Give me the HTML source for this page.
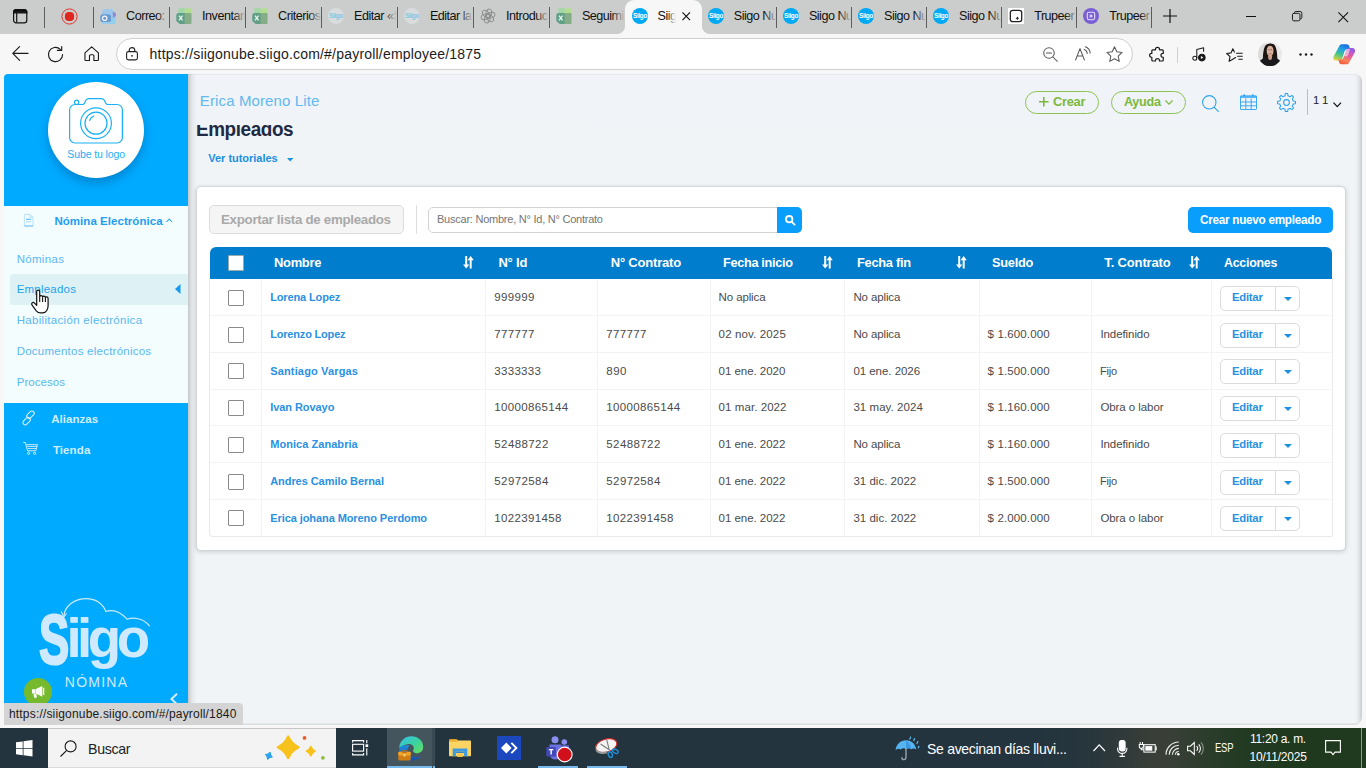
<!DOCTYPE html>
<html lang="es">
<head>
<meta charset="utf-8">
<title>Siigo Nube - Empleados</title>
<style>
*{box-sizing:border-box;margin:0;padding:0}
html,body{width:1366px;height:768px;overflow:hidden;background:#f7f7f7;font-family:"Liberation Sans",sans-serif;}
body{position:relative}
.a{position:absolute}
.t{position:absolute;white-space:pre;line-height:1}
svg{position:absolute;overflow:visible}
/* ---------- browser chrome ---------- */
#tabbar{position:absolute;left:0;top:0;width:1366px;height:34px;background:#cbcdcc}
#toolbar{position:absolute;left:0;top:34px;width:1366px;height:40px;background:#f7f7f7}
#acttab{position:absolute;left:625px;top:0;width:77px;height:34px;background:#f7f7f7;border-radius:9px 9px 0 0}
#acttab:before,#acttab:after{content:"";position:absolute;bottom:0;width:8px;height:8px}
#acttab:before{left:-8px;background:radial-gradient(circle at 0 0,rgba(247,247,247,0) 7.5px,#f7f7f7 8.5px)}
#acttab:after{right:-8px;background:radial-gradient(circle at 100% 0,rgba(247,247,247,0) 7.5px,#f7f7f7 8.5px)}
.tsep{position:absolute;top:7px;width:1px;height:21px;background:#5d5d5d}
.fade{position:absolute;top:6px;height:22px;width:22px;background:linear-gradient(90deg,rgba(203,205,204,0),#cbcdcc 85%)}
.fav{position:absolute;top:8px;width:16px;height:16px}
#addr{position:absolute;left:116px;top:38px;width:1017px;height:32px;border-radius:16px;background:#fff;border:1px solid #cfcfcf}
/* ---------- page ---------- */
#page{position:absolute;left:4px;top:74px;width:1358px;height:651px;background:#f0f4f7;border-radius:4px 7px 8px 0;overflow:hidden}
#page .t, #page .a, #page svg{ }
#side{position:absolute;left:0;top:0;width:184px;height:640px;background:#00aaff}
#sideshadow{z-index:3;position:absolute;left:184px;top:0;width:9px;height:651px;background:linear-gradient(90deg,rgba(0,0,0,.18),rgba(0,0,0,.05) 45%,rgba(0,0,0,0))}
#sub{position:absolute;left:0;top:132px;width:184px;height:197px;background:#f3fdfe}
#hl{position:absolute;left:6px;top:200px;width:178px;height:30.500px;background:#def2f5;border-radius:3px 0 0 3px}
#logoc{position:absolute;left:44px;top:8px;width:96px;height:96px;border-radius:50%;background:#fff;box-shadow:0 5px 10px rgba(0,40,90,.28)}
#status{position:absolute;left:0;top:629px;width:239px;height:22px;background:#d4d4d4;border-radius:0 4px 0 0}
#rshadow{position:absolute;right:0;top:0;width:7px;height:651px;background:linear-gradient(90deg,rgba(0,0,0,0),rgba(0,0,0,.05) 50%,rgba(0,0,0,.16))}
#tedge{position:absolute;left:184px;top:0;width:1174px;height:1px;background:rgba(0,0,20,.04)}
#bshadow{position:absolute;left:0;bottom:0;width:1358px;height:2px;background:linear-gradient(180deg,rgba(0,0,0,.02),rgba(0,0,0,.12))}
/* ---------- card / table ---------- */
#card{position:absolute;left:192px;top:112px;width:1150px;height:365px;background:#fff;border:1px solid #d2d5d9;border-radius:5px;box-shadow:0 1px 4px rgba(0,0,0,.16)}
#thead{position:absolute;left:206px;top:173px;width:1122px;height:31.600px;background:#007dcc;border-radius:6px 6px 0 0}
.cb{position:absolute;width:16px;height:16px;background:#fff;border:1px solid #8a8a8a;border-radius:1px}
.vl{position:absolute;width:1px;background:#f3f3f3}
.hl{position:absolute;height:1px;background:#f3f3f3}
.eb{position:absolute;width:80px;height:28px;border:1px solid #dcdcdc;border-radius:5px;background:#fff}
.eb i{position:absolute;left:53.500px;top:0;width:1px;height:26px;background:#dcdcdc}
.eb b{position:absolute;left:63px;top:12px;width:0;height:0;border-left:4px solid transparent;border-right:4px solid transparent;border-top:4.500px solid #1b8fe0}
/* ---------- taskbar ---------- */
#task{position:absolute;left:0;top:728px;width:1366px;height:40px;background:linear-gradient(90deg,#24343e 0%,#24343e 76%,#27363d 79.5%,#30393a 82%,#393f38 84.5%,#383f36 86%,#2b3c2b 88.5%,#223a22 91%,#1f391f 94%,#1f3a1f 100%)}
</style>
</head>
<body>
<!-- ================= BROWSER CHROME ================= -->
<div id="tabbar"></div>
<div id="toolbar"></div>
<div id="acttab"></div>
<svg style="left:12.8px;top:8.6px" width="14.4" height="14.4" viewBox="0 0 14.4 14.4" fill="none" stroke="#111" stroke-width="1.2"><rect x=".6" y=".6" width="13.2" height="13.2" rx="2.6"/><path d="M3.2.6h8a2.600 2.600 0 0 1 2.600 2.600v.6H.6v-.6A2.600 2.600 0 0 1 3.200.6z" fill="#111"/><path d="M3.700 4v9.600"/></svg>
<div class="tsep" style="left:44px"></div>
<svg style="left:60.900px;top:7.800px" width="17" height="17" viewBox="0 0 17 17"><circle cx="8.500" cy="8.500" r="7.600" fill="none" stroke="#e2352c" stroke-width="1"/><rect x="3.900" y="3.900" width="9.200" height="9.200" rx="3.800" fill="#e0271d"/></svg>
<div class="tsep" style="left:93.0px"></div>
<svg class="fav" style="left:100.1px" viewBox="0 0 16 16"><defs><linearGradient id="ol1" x1="0" y1="0" x2="1" y2="1"><stop offset="0" stop-color="#a5c3ea"/><stop offset="1" stop-color="#8fd3ee"/></linearGradient></defs><path d="M5 .900h7a1 1 0 0 1 1 1V6l2.800 1.700V15a1 1 0 0 1-1 1H3a1 1 0 0 1-1-1V3.900a3 3 0 0 1 3-3z" fill="url(#ol1)"/><path d="M12.800 3.200l3.100 2.100v2.700l-3.100 1.900z" fill="#9188d6"/><path d="M2.500 6.200h6a2.600 2.600 0 0 1 2.600 2.600v2.700a2.600 2.600 0 0 1-2.600 2.600h-6A2.200 2.200 0 0 1 .3 11.900V8.400a2.200 2.200 0 0 1 2.200-2.200z" fill="#6c9bd0"/><circle cx="4.700" cy="10.200" r="2.200" fill="none" stroke="#eef4fc" stroke-width="1.250"/></svg>
<div class="a tt" style="left:125.5px;top:6px;width:43px;height:22px;overflow:hidden"><span class="t" style="left:0.6px;top:4px;font-size:12.6px;color:#111;letter-spacing:-.5px">Correo:     </span><div class="fade" style="left:31px;top:0;width:13px;background:linear-gradient(90deg,rgba(203,205,204,0),#cbcdcc)"></div></div>
<div class="tsep" style="left:169.0px"></div>
<svg class="fav" style="left:176.1px" viewBox="0 0 16 16"><rect x="2.400" y=".3" width="6.300" height="6" fill="#9fd8a4"/><rect x="8.700" y=".3" width="6.800" height="6" fill="#b3de92"/><rect x="4" y="5" width="11.500" height="11" rx="1.200" fill="#86ae86"/><path d="M2.600 5h6v11H3.800L.3 13V7.300A2.300 2.300 0 0 1 2.600 5z" fill="#5f9f88"/><path d="M3 7.600l3.600 4.800M6.600 7.600L3 12.400" stroke="#e6f5ea" stroke-width="1.350" fill="none"/></svg>
<div class="a tt" style="left:201.5px;top:6px;width:43px;height:22px;overflow:hidden"><span class="t" style="left:0.6px;top:4px;font-size:12.6px;color:#111;letter-spacing:-.5px">Inventario</span><div class="fade" style="left:31px;top:0;width:13px;background:linear-gradient(90deg,rgba(203,205,204,0),#cbcdcc)"></div></div>
<div class="tsep" style="left:245.0px"></div>
<svg class="fav" style="left:252.1px" viewBox="0 0 16 16"><rect x="2.400" y=".3" width="6.300" height="6" fill="#9fd8a4"/><rect x="8.700" y=".3" width="6.800" height="6" fill="#b3de92"/><rect x="4" y="5" width="11.500" height="11" rx="1.200" fill="#86ae86"/><path d="M2.600 5h6v11H3.800L.3 13V7.300A2.300 2.300 0 0 1 2.600 5z" fill="#5f9f88"/><path d="M3 7.600l3.600 4.800M6.600 7.600L3 12.400" stroke="#e6f5ea" stroke-width="1.350" fill="none"/></svg>
<div class="a tt" style="left:277.5px;top:6px;width:43px;height:22px;overflow:hidden"><span class="t" style="left:0.6px;top:4px;font-size:12.6px;color:#111;letter-spacing:-.5px">Criterios de</span><div class="fade" style="left:31px;top:0;width:13px;background:linear-gradient(90deg,rgba(203,205,204,0),#cbcdcc)"></div></div>
<div class="tsep" style="left:320.9px"></div>
<svg class="fav" style="left:328.0px" viewBox="0 0 16 16"><circle cx="8" cy="8" r="8" fill="#d8dcdd"/><text x="8" y="10.3" font-family="Liberation Sans,sans-serif" font-size="6.4" font-weight="700" fill="#86c4e0" text-anchor="middle" letter-spacing="-.3">Siigo</text></svg>
<div class="a tt" style="left:353.4px;top:6px;width:43px;height:22px;overflow:hidden"><span class="t" style="left:0.6px;top:4px;font-size:12.6px;color:#111;letter-spacing:-.5px">Editar «Siigo</span><div class="fade" style="left:31px;top:0;width:13px;background:linear-gradient(90deg,rgba(203,205,204,0),#cbcdcc)"></div></div>
<div class="tsep" style="left:396.8px"></div>
<svg class="fav" style="left:403.9px" viewBox="0 0 16 16"><circle cx="8" cy="8" r="8" fill="#d8dcdd"/><text x="8" y="10.3" font-family="Liberation Sans,sans-serif" font-size="6.4" font-weight="700" fill="#86c4e0" text-anchor="middle" letter-spacing="-.3">Siigo</text></svg>
<div class="a tt" style="left:429.3px;top:6px;width:43px;height:22px;overflow:hidden"><span class="t" style="left:0.6px;top:4px;font-size:12.6px;color:#111;letter-spacing:-.5px">Editar la</span><div class="fade" style="left:31px;top:0;width:13px;background:linear-gradient(90deg,rgba(203,205,204,0),#cbcdcc)"></div></div>
<div class="tsep" style="left:472.9px"></div>
<svg class="fav" style="left:480.0px" viewBox="0 0 16 16" fill="none" stroke="#8b8d8b" stroke-width=".950" opacity=".95"><ellipse cx="8" cy="5.300" rx="2.700" ry="4.400" transform="rotate(15 8 8)"/><ellipse cx="8" cy="5.300" rx="2.700" ry="4.400" transform="rotate(75 8 8)"/><ellipse cx="8" cy="5.300" rx="2.700" ry="4.400" transform="rotate(135 8 8)"/><ellipse cx="8" cy="5.300" rx="2.700" ry="4.400" transform="rotate(195 8 8)"/><ellipse cx="8" cy="5.300" rx="2.700" ry="4.400" transform="rotate(255 8 8)"/><ellipse cx="8" cy="5.300" rx="2.700" ry="4.400" transform="rotate(315 8 8)"/></svg>
<div class="a tt" style="left:505.4px;top:6px;width:43px;height:22px;overflow:hidden"><span class="t" style="left:0.6px;top:4px;font-size:12.6px;color:#111;letter-spacing:-.5px">Introducción</span><div class="fade" style="left:31px;top:0;width:13px;background:linear-gradient(90deg,rgba(203,205,204,0),#cbcdcc)"></div></div>
<div class="tsep" style="left:548.8px"></div>
<svg class="fav" style="left:555.9px" viewBox="0 0 16 16"><rect x="2.400" y=".3" width="6.300" height="6" fill="#9fd8a4"/><rect x="8.700" y=".3" width="6.800" height="6" fill="#b3de92"/><rect x="4" y="5" width="11.500" height="11" rx="1.200" fill="#86ae86"/><path d="M2.600 5h6v11H3.800L.3 13V7.300A2.300 2.300 0 0 1 2.600 5z" fill="#5f9f88"/><path d="M3 7.600l3.600 4.800M6.600 7.600L3 12.400" stroke="#e6f5ea" stroke-width="1.350" fill="none"/></svg>
<div class="a tt" style="left:581.3px;top:6px;width:43px;height:22px;overflow:hidden"><span class="t" style="left:0.6px;top:4px;font-size:12.6px;color:#111;letter-spacing:-.5px">Seguimiento</span><div class="fade" style="left:31px;top:0;width:13px;background:linear-gradient(90deg,rgba(203,205,204,0),#cbcdcc)"></div></div>
<svg class="fav" style="left:631.6px" viewBox="0 0 16 16"><circle cx="8" cy="8" r="8" fill="#00a9f4"/><text x="8" y="10.3" font-family="Liberation Sans,sans-serif" font-size="6.4" font-weight="700" fill="#fff" text-anchor="middle" letter-spacing="-.3">Siigo</text></svg>
<div class="a tt" style="left:657.0px;top:6px;width:20px;height:22px;overflow:hidden"><span class="t" style="left:0.6px;top:4px;font-size:12.6px;color:#111;letter-spacing:-.5px">Siigo Nube</span><div class="fade" style="left:10px;top:0;width:10px;background:linear-gradient(90deg,rgba(247,247,247,0),#f7f7f7 90%)"></div></div>
<svg class="fav" style="left:707.8px" viewBox="0 0 16 16"><circle cx="8" cy="8" r="8" fill="#00a9f4"/><text x="8" y="10.3" font-family="Liberation Sans,sans-serif" font-size="6.4" font-weight="700" fill="#fff" text-anchor="middle" letter-spacing="-.3">Siigo</text></svg>
<div class="a tt" style="left:733.2px;top:6px;width:43px;height:22px;overflow:hidden"><span class="t" style="left:0.6px;top:4px;font-size:12.6px;color:#111;letter-spacing:-.5px">Siigo Nube</span><div class="fade" style="left:31px;top:0;width:13px;background:linear-gradient(90deg,rgba(203,205,204,0),#cbcdcc)"></div></div>
<div class="tsep" style="left:775.8px"></div>
<svg class="fav" style="left:782.9px" viewBox="0 0 16 16"><circle cx="8" cy="8" r="8" fill="#00a9f4"/><text x="8" y="10.3" font-family="Liberation Sans,sans-serif" font-size="6.4" font-weight="700" fill="#fff" text-anchor="middle" letter-spacing="-.3">Siigo</text></svg>
<div class="a tt" style="left:808.3px;top:6px;width:43px;height:22px;overflow:hidden"><span class="t" style="left:0.6px;top:4px;font-size:12.6px;color:#111;letter-spacing:-.5px">Siigo Nube</span><div class="fade" style="left:31px;top:0;width:13px;background:linear-gradient(90deg,rgba(203,205,204,0),#cbcdcc)"></div></div>
<div class="tsep" style="left:850.9px"></div>
<svg class="fav" style="left:858.0px" viewBox="0 0 16 16"><circle cx="8" cy="8" r="8" fill="#00a9f4"/><text x="8" y="10.3" font-family="Liberation Sans,sans-serif" font-size="6.4" font-weight="700" fill="#fff" text-anchor="middle" letter-spacing="-.3">Siigo</text></svg>
<div class="a tt" style="left:883.4px;top:6px;width:43px;height:22px;overflow:hidden"><span class="t" style="left:0.6px;top:4px;font-size:12.6px;color:#111;letter-spacing:-.5px">Siigo Nube</span><div class="fade" style="left:31px;top:0;width:13px;background:linear-gradient(90deg,rgba(203,205,204,0),#cbcdcc)"></div></div>
<div class="tsep" style="left:926.0px"></div>
<svg class="fav" style="left:933.1px" viewBox="0 0 16 16"><circle cx="8" cy="8" r="8" fill="#00a9f4"/><text x="8" y="10.3" font-family="Liberation Sans,sans-serif" font-size="6.4" font-weight="700" fill="#fff" text-anchor="middle" letter-spacing="-.3">Siigo</text></svg>
<div class="a tt" style="left:958.5px;top:6px;width:43px;height:22px;overflow:hidden"><span class="t" style="left:0.6px;top:4px;font-size:12.6px;color:#111;letter-spacing:-.5px">Siigo Nube</span><div class="fade" style="left:31px;top:0;width:13px;background:linear-gradient(90deg,rgba(203,205,204,0),#cbcdcc)"></div></div>
<div class="tsep" style="left:1001.1px"></div>
<svg class="fav" style="left:1008.2px" viewBox="0 0 16 16"><rect width="16" height="16" fill="#fff"/><rect x="2.3" y="2.3" width="11.4" height="11.4" rx="2.4" fill="none" stroke="#202020" stroke-width="1.3"/><path d="M9.4 8.8v3M7.9 10.3h3" stroke="#202020" stroke-width="1"/></svg>
<div class="a tt" style="left:1033.6px;top:6px;width:43px;height:22px;overflow:hidden"><span class="t" style="left:0.6px;top:4px;font-size:12.6px;color:#111;letter-spacing:-.5px">Trupeer</span><div class="fade" style="left:31px;top:0;width:13px;background:linear-gradient(90deg,rgba(203,205,204,0),#cbcdcc)"></div></div>
<div class="tsep" style="left:1076.2px"></div>
<svg class="fav" style="left:1083.3px" viewBox="0 0 16 16"><circle cx="8" cy="8" r="8" fill="#7a5fd3"/><rect x="4.3" y="4.3" width="7.4" height="7.4" rx="1.6" fill="none" stroke="#e8e0ff" stroke-width="1.1"/><rect x="6.6" y="6.6" width="2.8" height="2.8" fill="#d8ccff"/></svg>
<div class="a tt" style="left:1108.7px;top:6px;width:43px;height:22px;overflow:hidden"><span class="t" style="left:0.6px;top:4px;font-size:12.6px;color:#111;letter-spacing:-.5px">Trupeer</span><div class="fade" style="left:31px;top:0;width:13px;background:linear-gradient(90deg,rgba(203,205,204,0),#cbcdcc)"></div></div>
<div class="tsep" style="left:1151.3px"></div>
<svg style="left:682.200px;top:12.400px" width="8.500" height="8.500" viewBox="0 0 9 9" stroke="#111" stroke-width="1.200" fill="none"><path d="M.5.5l8 8M8.5.5l-8 8"/></svg>
<svg style="left:1163px;top:9px" width="14" height="14" viewBox="0 0 14 14" stroke="#111" stroke-width="1.2" fill="none"><path d="M7 0v14M0 7h14"/></svg>
<svg style="left:1246px;top:11px" width="10" height="11" viewBox="0 0 10 11" stroke="#111" stroke-width="1" fill="none"><path d="M0 5.5h10"/></svg>
<svg style="left:1291.700px;top:11.300px" width="10.300" height="10.300" viewBox="0 0 11 11" stroke="#111" stroke-width="1" fill="none"><rect x=".5" y="2.5" width="8" height="8" rx="1.6"/><path d="M2.6 2.3V2A1.5 1.5 0 0 1 4.1.5H8.6a1.9 1.9 0 0 1 1.9 1.9V7A1.5 1.5 0 0 1 9 8.4h-.4"/></svg>
<svg style="left:1338px;top:11.5px" width="10.5" height="10.5" viewBox="0 0 10.5 10.5" stroke="#111" stroke-width="1.05" fill="none"><path d="M.4.4l9.7 9.7M10.1.4L.4 10.1"/></svg>
<!-- toolbar -->
<svg style="left:12px;top:46px" width="17" height="15" viewBox="0 0 17 15" stroke="#1a1a1a" stroke-width="1.15" fill="none" stroke-linecap="round" stroke-linejoin="round"><path d="M16 7.4H.8M7.6.6L.8 7.4l6.8 6.9"/></svg>
<svg style="left:47.300px;top:45.900px" width="17" height="17" viewBox="0 0 17 17" stroke="#1a1a1a" stroke-width="1.15" fill="none" stroke-linecap="round" stroke-linejoin="round"><path d="M15.6 8.5a7.1 7.1 0 1 1-2.3-5.2"/><path d="M10.4 3.4h4.3V-.4" transform="translate(0,1)"/></svg>
<svg style="left:84.300px;top:46.100px" width="15.400" height="15.400" viewBox="0 0 16 16" stroke="#1a1a1a" stroke-width="1.15" fill="none" stroke-linejoin="round"><path d="M1 7.2L8 .9l7 6.3V14.3a.8.8 0 0 1-.8.8H10.3V10.2a1.1 1.1 0 0 0-1.1-1.1H6.8a1.1 1.1 0 0 0-1.1 1.1v4.9H1.8a.8.8 0 0 1-.8-.8z"/></svg>
<div id="addr"></div>
<svg style="left:126px;top:46.5px" width="12" height="13.5" viewBox="0 0 12 13.5" stroke="#222" stroke-width="1.1" fill="none"><rect x=".6" y="4.6" width="10.8" height="8.3" rx="1.8"/><path d="M3.2 4.6V3.4a2.8 2.8 0 0 1 5.6 0v1.2"/><circle cx="6" cy="8.8" r=".9" fill="#222" stroke="none"/></svg>
<span class="t" style="left:149.6px;top:47px;font-size:14px;color:#1b1b1b;letter-spacing:0.202px;">https://siigonube.siigo.com/#/payroll/employee/1875</span>
<svg style="left:1042.5px;top:46.5px" width="15" height="15" viewBox="0 0 15 15" stroke="#5a5a5a" stroke-width="1.05" fill="none" stroke-linecap="round"><circle cx="6" cy="6" r="5.3"/><path d="M3.4 6h5.2M10 10l4.3 4.3"/></svg>
<svg style="left:1075px;top:46px" width="16" height="15" viewBox="0 0 16 15" stroke="#5a5a5a" stroke-width="1.05" fill="none" stroke-linecap="round" stroke-linejoin="round"><path d="M.6 14L5 2.6 9.4 14M2.2 10h5.6"/><path d="M9.2 3.6a4.6 4.6 0 0 1 3 3.9M10.3.8a7.3 7.3 0 0 1 4.9 6.3"/></svg>
<svg style="left:1105.5px;top:46px" width="17" height="16.5" viewBox="0 0 17 16.5" stroke="#5a5a5a" stroke-width="1.05" fill="none" stroke-linejoin="round"><path d="M8.5.8l2.3 4.9 5.3.7-3.9 3.7 1 5.3-4.7-2.6-4.7 2.6 1-5.3L.9 6.4l5.3-.7z"/></svg>
<svg style="left:1149.5px;top:45.5px" width="15" height="17" viewBox="0 0 15 17" stroke="#1a1a1a" stroke-width="1.25" fill="none" stroke-linejoin="round"><path d="M5.4 3.3a2.1 2.1 0 0 1 4.2 0v.5h2.9a1 1 0 0 1 1 1v2.7h-.4a2 2 0 0 0 0 4h.4v2.9a1 1 0 0 1-1 1H9.6v-.4a2.1 2.1 0 0 0-4.2 0v.4H2.6a1 1 0 0 1-1-1v-2.9h-.3a2 2 0 0 1 0-4h.3V4.8a1 1 0 0 1 1-1h2.8z" transform="translate(.3,.2) scale(.96)"/></svg>
<div class="a" style="left:1177px;top:46.5px;width:1px;height:16px;background:#d0d0d0"></div>
<svg style="left:1192px;top:47px" width="14" height="15" viewBox="0 0 14 15" stroke="#1a1a1a" stroke-width="1.05" fill="none" stroke-linejoin="round"><path d="M4.8 11V2.6L11.6.8v4"/><circle cx="2.8" cy="11.2" r="2" /><circle cx="9.8" cy="10.6" r="3.3" fill="#1a1a1a"/><path d="M8.9 9.1v3l2.4-1.5z" fill="#fff" stroke="none"/></svg>
<svg style="left:1225.5px;top:46px" width="17" height="16.5" viewBox="0 0 17 16.5" stroke="#1a1a1a" stroke-width="1.1" fill="none" stroke-linejoin="round" stroke-linecap="round"><path d="M9.6 11.6L6.8 13.2 3.1 15.3l.9-4.6L.7 7.5l4.4-.6L6.8 2.800l1.600 3.3"/><path d="M10.500 7.300h5.800M11.600 10.300h4.700M12.800 13.300h3.500" /></svg>
<svg style="left:1257.500px;top:41.500px" width="24" height="24" viewBox="0 0 24 24"><defs><clipPath id="avc"><circle cx="12" cy="12" r="12"/></clipPath></defs><g clip-path="url(#avc)"><rect width="24" height="24" fill="#ebe9e8"/><rect x="0" y="0" width="7" height="24" fill="#dedcda"/><path d="M5.200 24C4.600 17 4.800 8.500 7 4.200 8.600 1 15.200.6 17.200 4c2.300 4.300 2.400 13 1.700 20z" fill="#1b1512"/><path d="M8.700 8.800c0-3.200 1.500-5 3.400-5s3.400 1.800 3.400 5c0 3.300-1.500 5.600-3.400 5.600s-3.400-2.300-3.400-5.600z" fill="#d8b09a"/><path d="M10.300 10.900c1.100.8 2.500.8 3.600 0-.3 1.100-1 1.700-1.800 1.700s-1.500-.6-1.800-1.700z" fill="#b5736a"/><path d="M10.400 7.700h1.200M12.700 7.700h1.200" stroke="#4a342c" stroke-width=".7"/><path d="M0 24c.4-4.600 3.600-7.400 7.800-8.400l4.300 1.700 4.300-1.700c4.200 1 7.200 3.800 7.600 8.400z" fill="#1a1a1d"/><path d="M10 14h4.200l-.2 2.100a1.900 1.900 0 0 1-3.800 0z" fill="#c99f8a"/></g></svg>
<svg style="left:1299px;top:52.5px" width="14" height="3" viewBox="0 0 14 3" fill="#1a1a1a"><circle cx="1.500" cy="1.500" r="1.200"/><circle cx="7" cy="1.500" r="1.200"/><circle cx="12.500" cy="1.500" r="1.200"/></svg>
<svg style="left:1333px;top:43.800px" width="22.400" height="20.600" viewBox="0 0 22.400 20.600"><defs><linearGradient id="cp1" x1=".6" y1="0" x2=".2" y2="1"><stop offset="0" stop-color="#1b6fe0"/><stop offset=".3" stop-color="#20a4e4"/><stop offset=".62" stop-color="#45c78a"/><stop offset="1" stop-color="#e9d33c"/></linearGradient><linearGradient id="cp2" x1=".7" y1="0" x2=".3" y2="1"><stop offset="0" stop-color="#8f5ce6"/><stop offset=".4" stop-color="#e25aa8"/><stop offset=".75" stop-color="#f7855a"/><stop offset="1" stop-color="#f25c3c"/></linearGradient></defs><path d="M6.200 2.200C6.700.900 7.800.3 9.100.3h4.400c1.400 0 2.400.8 2.800 2.100l.8 2.600h-2.300c-1.500 0-2.600.9-3.100 2.300l-2.500 7.300c-.5 1.300-1.500 2-2.900 2H3.100C1 16.600-.3 14.700.4 12.700z" fill="url(#cp1)"/><path d="M16.200 18.400c-.5 1.300-1.600 1.900-2.900 1.900H8.900c-1.400 0-2.400-.8-2.800-2.100l-.8-2.600h2.300c1.500 0 2.600-.9 3.100-2.300l2.500-7.300c.5-1.300 1.500-2 2.900-2h3.200c2.100 0 3.400 1.900 2.700 3.900z" fill="url(#cp2)"/><path d="M11.700 7.300c.5-1.400 1.600-2.300 3.100-2.300h2.300l-1.700 5.400c-.4 1.200-1.300 1.900-2.500 1.900h-2.900z" fill="#fdf3f6" opacity=".55"/></svg>
<!-- ================= PAGE ================= -->
<div id="pagetop" class="a" style="left:10px;top:73px;width:1346px;height:1px;background:#f3f5f9"></div>
<div id="page">
<!-- coordinates inside #page are offset by (-4,-74) from the screen -->
<div id="side">
  <div id="logoc"></div>
  <!-- camera -->
  <svg style="left:65px;top:24px" width="54" height="46" viewBox="0 0 54 46" fill="none" stroke="#1bb0f6" stroke-width="1.200" stroke-linejoin="round">
    <path d="M6 6.500h7.300c1.200 0 1.800-.5 2.300-1.600l.9-2.100C17.100 1.400 18.200.6 19.700.6h12.800c1.500 0 2.600.8 3.200 2.200l.9 2.100c.5 1.100 1.100 1.600 2.300 1.600H48c3 0 5.400 2.400 5.400 5.400v27.700c0 3-2.400 5.400-5.400 5.400H6c-3 0-5.400-2.400-5.400-5.400V11.900C.6 8.900 3 6.500 6 6.500z"/>
    <circle cx="27" cy="25.200" r="15.400"/>
    <circle cx="27" cy="25.200" r="11"/>
    <path d="M20.600 22.500a7 7 0 0 1 4-4.400" stroke-linecap="round"/>
    <circle cx="7.600" cy="4.300" r="2.200"/>
  </svg>
  <span class="t" style="left:63.3px;top:75px;font-size:10.5px;color:#25aff5;letter-spacing:-0.106px;">Sube tu logo</span>
  <div id="sub"></div>
  <div id="hl"></div>
  <!-- doc icon -->
  <svg style="left:19.800px;top:139.600px" width="9.400" height="12.400" viewBox="0 0 9.400 12.400" fill="none" stroke="#a9dcfa" stroke-width=".8"><path d="M.400.400h5.600l3 3v8.600h-8.600z"/><path d="M6 .400v3h3"/><path d="M2 5.400h5.200" stroke="#74c3f3" stroke-width="1.300"/><path d="M2 7.800h5.200" stroke="#8fd0f6" stroke-width=".8"/><path d="M.400 12h8.600" stroke="#6bbcf0" stroke-width=".9"/></svg>
  <span class="t" style="left:50.4px;top:142px;font-size:11.5px;font-weight:700;color:#1f9df0;letter-spacing:0.049px;">Nómina Electrónica</span>
  <svg style="left:162.200px;top:143.800px" width="6.500" height="4.500" viewBox="0 0 6.500 4.500" fill="none" stroke="#29a1e8" stroke-width="1.100"><path d="M.500 4l2.750-3L6 4"/></svg>
  <span class="t" style="left:12.7px;top:180px;font-size:11.5px;color:#5ab8f1;letter-spacing:0.302px;">Nóminas</span>
  <span class="t" style="left:12.7px;top:210px;font-size:11.5px;color:#1fa2ee;letter-spacing:0.207px;">Empleados</span>
  <span class="t" style="left:12.7px;top:241px;font-size:11.5px;color:#5ab8f1;letter-spacing:0.310px;">Habilitación electrónica</span>
  <span class="t" style="left:12.7px;top:272px;font-size:11.5px;color:#5ab8f1;letter-spacing:0.240px;">Documentos electrónicos</span>
  <span class="t" style="left:12.7px;top:303px;font-size:11.5px;color:#5ab8f1;letter-spacing:0.066px;">Procesos</span>
  <svg style="left:171px;top:209.800px" width="5.500" height="10" viewBox="0 0 5.500 10"><path d="M5.500 0v10L0 5z" fill="#1599ee"/></svg>
  <!-- link icon -->
  <svg style="left:17.500px;top:337.500px" width="14" height="13" viewBox="0 0 14 13" fill="none" stroke="#d9f1ff" stroke-width="1.050"><rect x="6.200" y="-1.600" width="4.600" height="8.600" rx="2.300" transform="rotate(45 8.500 2.700)"/><rect x="2.300" y="4.900" width="4.600" height="8.600" rx="2.300" transform="rotate(45 4.600 9.200)"/></svg>
  <span class="t" style="left:47.3px;top:340px;font-size:11.5px;font-weight:700;color:#d0eeff;letter-spacing:0.018px;">Alianzas</span>
  <!-- cart icon -->
  <svg style="left:18.500px;top:368px" width="15" height="13" viewBox="0 0 15 13" fill="none" stroke="#d9f1ff" stroke-width=".950"><path d="M.3.500h2l2.300 8.300h8.200l1.600-6.100H3.300"/><path d="M4.300 4.500h9.500M4.900 6.500h8.500" stroke-width=".8"/><circle cx="5.600" cy="11.300" r="1.100"/><circle cx="11.600" cy="11.300" r="1.100"/></svg>
  <span class="t" style="left:48.9px;top:371px;font-size:11.5px;font-weight:700;color:#d0eeff;letter-spacing:0.108px;">Tienda</span>
  <!-- Siigo logo -->
  <svg style="left:36px;top:522px" width="114" height="72" viewBox="0 0 114 72" fill="none">
    <path d="M24 19.500C25 10 34 2.600 46.500 2.600c9.500 0 16.500 5.400 19.400 12.900 6.100-2 14.100 0 21.500 7.800 5.600-2.300 15.600-1.300 22.100 6.500" stroke="#cdeaff" stroke-width="1.200" stroke-linecap="round"/>
    <path d="M21.200 15.600l2.700 5.300 2.700-3.400" stroke="#cdeaff" stroke-width="1.100" stroke-linejoin="round"/>
  </svg>
  <div class="a" id="logo" style="left:0;top:520px;width:184px;height:90px;color:#cfeafe;font-weight:700;line-height:1;white-space:pre">
    <span class="a" style="left:35.200px;top:9.500px;font-size:71px;transform:scaleX(.640);transform-origin:0 50%;-webkit-text-stroke:2.200px #cfeafe">S</span><span class="a" style="left:62.400px;top:16.500px;font-size:54.700px;letter-spacing:-4.500px">iigo</span>
  </div>
  <span class="t" style="left:60.8px;top:601px;font-size:14px;color:#cfeafe;letter-spacing:1.240px;">NÓMINA</span>
  <!-- megaphone -->
  <div class="a" style="left:19.700px;top:603.500px;width:28px;height:28px;border-radius:50%;background:#76b92c"></div>
  <svg style="left:27.500px;top:611.500px" width="13" height="12" viewBox="0 0 13 12" fill="#fbfdf6"><path d="M0 3.300h3v4.200H0zM3.400 3.200L10.300 0v10.800L3.400 7.600z"/><path d="M1.500 7.800h2.800l.6 4H2.100z"/><path d="M10.900 1.800h1.400v7.200h-1.400z"/></svg>
  <svg style="left:165.800px;top:619.300px" width="8" height="12" viewBox="0 0 8 12" fill="none" stroke="#d8f0ff" stroke-width="1.900"><path d="M7 .700L1.400 6 7 11.300"/></svg>
</div>
<div id="sideshadow"></div>
<!-- ===== header ===== -->
<div class="a" id="hdrbg" style="left:184px;top:0;width:1174px;height:52px;background:linear-gradient(180deg,#f0f3f7 0,#f0f3f7 46px,#f0f4f7 52px)"></div>
<span class="t" style="left:195.8px;top:19px;font-size:15px;color:#62b9ef;letter-spacing:0.127px;">Erica Moreno Lite</span>
<div class="a" style="left:1021px;top:17px;width:74px;height:23px;border:1px solid #8dc354;border-radius:12px"></div>
<svg style="left:1034.800px;top:23.300px" width="9.600" height="9.600" viewBox="0 0 10 10" stroke="#7cb83c" stroke-width="1.700" fill="none"><path d="M5 0v10M0 5h10"/></svg>
<span class="t" style="left:1049.4px;top:21px;font-size:13.5px;font-weight:700;color:#7cb83c;letter-spacing:-0.297px;transform:scaleX(0.9503);transform-origin:0 50%;">Crear</span>
<div class="a" style="left:1107px;top:17px;width:75px;height:23px;border:1px solid #8dc354;border-radius:12px"></div>
<span class="t" style="left:1120.0px;top:21px;font-size:13.5px;font-weight:700;color:#7cb83c;letter-spacing:-0.297px;transform:scaleX(0.9349);transform-origin:0 50%;">Ayuda</span>
<svg style="left:1161px;top:26px" width="8" height="5" viewBox="0 0 8 5" stroke="#7cb83c" stroke-width="1.100" fill="none"><path d="M.400.500L4 4.200 7.600.500"/></svg>
<!-- search -->
<svg style="left:1197.500px;top:20.500px" width="17" height="17" viewBox="0 0 17 17" stroke="#2aa2f2" stroke-width="1.050" fill="none" stroke-linecap="round"><circle cx="7.300" cy="7.300" r="6.700"/><path d="M12.200 12.400l4.200 4"/></svg>
<!-- calendar -->
<svg style="left:1236px;top:20.300px" width="17" height="16" viewBox="0 0 17 16" stroke="#2aa2f2" stroke-width=".9" fill="none"><rect x=".5" y="1.800" width="16" height="13.700" rx=".6"/><path d="M.5 3h16" stroke-width="1.500"/><path d="M.5 8h16M.5 11.800h16M5.800 4.300V15.500M11.200 4.300V15.500"/><path d="M4.200 .2v1.800M12.800 .2v1.800" stroke-width="1.400"/></svg>
<!-- gear -->
<svg style="left:1272.500px;top:19px" width="19" height="19" viewBox="0 0 19 19" stroke="#2aa2f2" stroke-width="1.050" fill="none" stroke-linejoin="round"><circle cx="9.500" cy="9.500" r="2.900"/><path d="M8.05 2.75L8.30 0.58L10.70 0.58L10.95 2.75L13.24 3.70L14.96 2.35L16.65 4.04L15.30 5.76L16.25 8.05L18.42 8.30L18.42 10.70L16.25 10.95L15.30 13.24L16.65 14.96L14.96 16.65L13.24 15.30L10.95 16.25L10.70 18.42L8.30 18.42L8.05 16.25L5.76 15.30L4.04 16.65L2.35 14.96L3.70 13.24L2.75 10.95L0.58 10.70L0.58 8.30L2.75 8.05L3.70 5.76L2.35 4.04L4.04 2.35L5.76 3.70z"/></svg>
<div class="a" style="left:1303px;top:15px;width:1px;height:26px;background:#b9bdc2"></div>
<span class="t" style="left:1308.5px;top:21px;font-size:11.5px;color:#1c1c28;letter-spacing:-0.253px;transform:scaleX(0.9810);transform-origin:0 50%;">1 1</span>
<svg style="left:1329px;top:28px" width="8.500" height="5.500" viewBox="0 0 8.500 5.500" stroke="#16161c" stroke-width="1.300" fill="none"><path d="M.500.600l3.750 4L8 .600"/></svg>
<!-- ===== title (clipped by fixed header) ===== -->
<div class="a" style="left:186px;top:50px;width:400px;height:30px;overflow:hidden">
  <div class="a" style="left:0;top:0;width:400px;height:.6px;background:#f0f4f7;z-index:2"></div>
  <span class="t" style="left:5.8px;top:-4px;font-size:19.5px;font-weight:700;color:#1f2a44;letter-spacing:-0.429px;transform:scaleX(0.9700);transform-origin:0 50%;">Empleados</span>
</div>
<span class="t" style="left:204.3px;top:79px;font-size:11px;font-weight:700;color:#1b8fe0;letter-spacing:-0.023px;">Ver tutoriales</span>
<svg style="left:282.600px;top:84.300px" width="6.400" height="3.600" viewBox="0 0 6.400 3.600"><path d="M0 0h6.400L3.200 3.600z" fill="#1b8fe0"/></svg>
<!-- ===== card ===== -->
<div id="card"></div>
<div class="a" style="left:205px;top:131px;width:195px;height:29px;background:#f5f5f5;border:1px solid #dcdcdc;border-radius:5px"></div>
<span class="t" style="left:217.4px;top:139px;font-size:13.5px;font-weight:700;color:#a9a9a9;letter-spacing:-0.297px;transform:scaleX(0.9864);transform-origin:0 50%;">Exportar lista de empleados</span>
<div class="a" style="left:412px;top:131px;width:1px;height:29px;background:#dedede"></div>
<div class="a" style="left:424px;top:133px;width:350px;height:26px;background:#fff;border:1px solid #d2d2d2;border-radius:5px 0 0 5px"></div>
<span class="t" style="left:433.2px;top:140px;font-size:11.5px;color:#757575;letter-spacing:-0.253px;transform:scaleX(0.9572);transform-origin:0 50%;">Buscar: Nombre, N° Id, N° Contrato</span>
<div class="a" style="left:773px;top:133px;width:25px;height:26px;background:#0a9efc;border-radius:0 5px 5px 0"></div>
<svg style="left:780.500px;top:141px" width="10.500" height="10.500" viewBox="0 0 10.500 10.500" stroke="#fff" stroke-width="1.800" fill="none" stroke-linecap="round"><circle cx="4.200" cy="4.200" r="3.200"/><path d="M6.800 6.800l2.800 2.800"/></svg>
<div class="a" style="left:1184px;top:133px;width:145px;height:26px;background:#0a9efc;border-radius:5px"></div>
<span class="t" style="left:1196.2px;top:140px;font-size:12px;font-weight:700;color:#ffffff;letter-spacing:-0.264px;transform:scaleX(0.9754);transform-origin:0 50%;">Crear nuevo empleado</span>
<!-- ===== table ===== -->
<div id="thead"></div>
<div class="cb" style="left:224.300px;top:181.300px;border-color:#9aa;"></div>
<span class="t" style="left:270.0px;top:182px;font-size:13px;font-weight:700;color:#ffffff;letter-spacing:-0.286px;transform:scaleX(0.9938);transform-origin:0 50%;">Nombre</span>
<span class="t" style="left:494.4px;top:182px;font-size:13px;font-weight:700;color:#ffffff;letter-spacing:-0.191px;">N° Id</span>
<span class="t" style="left:606.7px;top:182px;font-size:13px;font-weight:700;color:#ffffff;letter-spacing:-0.186px;">N° Contrato</span>
<span class="t" style="left:718.6px;top:182px;font-size:13px;font-weight:700;color:#ffffff;letter-spacing:-0.286px;transform:scaleX(0.9723);transform-origin:0 50%;">Fecha inicio</span>
<span class="t" style="left:853.4px;top:182px;font-size:13px;font-weight:700;color:#ffffff;letter-spacing:-0.286px;transform:scaleX(0.9856);transform-origin:0 50%;">Fecha fin</span>
<span class="t" style="left:987.8px;top:182px;font-size:13px;font-weight:700;color:#ffffff;letter-spacing:-0.286px;transform:scaleX(0.9854);transform-origin:0 50%;">Sueldo</span>
<span class="t" style="left:1100.3px;top:182px;font-size:13px;font-weight:700;color:#ffffff;letter-spacing:-0.149px;">T. Contrato</span>
<span class="t" style="left:1220.0px;top:182px;font-size:13px;font-weight:700;color:#ffffff;letter-spacing:-0.286px;transform:scaleX(0.9550);transform-origin:0 50%;">Acciones</span>
<svg style="left:459.1px;top:181.800px" width="10.800" height="12.600" viewBox="0 0 10.800 12.600" fill="#fff"><path d="M2.200 0h2v8.400h2.200L3.200 12.600 0 8.400h2.200zM6.700 12.600h2V4.200h2.100L7.700 0 4.500 4.200h2.200z"/></svg>
<svg style="left:818.4px;top:181.800px" width="10.800" height="12.600" viewBox="0 0 10.800 12.600" fill="#fff"><path d="M2.200 0h2v8.400h2.200L3.200 12.600 0 8.400h2.200zM6.700 12.600h2V4.200h2.100L7.700 0 4.500 4.200h2.200z"/></svg>
<svg style="left:952.4px;top:181.800px" width="10.800" height="12.600" viewBox="0 0 10.800 12.600" fill="#fff"><path d="M2.200 0h2v8.400h2.200L3.200 12.600 0 8.400h2.200zM6.700 12.600h2V4.200h2.100L7.700 0 4.500 4.200h2.200z"/></svg>
<svg style="left:1184.8px;top:181.800px" width="10.800" height="12.600" viewBox="0 0 10.800 12.600" fill="#fff"><path d="M2.200 0h2v8.400h2.200L3.200 12.600 0 8.400h2.200zM6.700 12.600h2V4.200h2.100L7.700 0 4.500 4.200h2.200z"/></svg>
<div class="vl" style="left:257px;top:204.7px;height:257.8px"></div>
<div class="vl" style="left:481px;top:204.7px;height:257.8px"></div>
<div class="vl" style="left:593px;top:204.7px;height:257.8px"></div>
<div class="vl" style="left:706px;top:204.7px;height:257.8px"></div>
<div class="vl" style="left:840px;top:204.7px;height:257.8px"></div>
<div class="vl" style="left:975px;top:204.7px;height:257.8px"></div>
<div class="vl" style="left:1087px;top:204.7px;height:257.8px"></div>
<div class="vl" style="left:1207px;top:204.7px;height:257.8px"></div>
<div class="vl" style="left:205px;top:204.7px;height:254.8px;background:#e9e9e9"></div>
<div class="vl" style="left:1328px;top:204.7px;height:255.8px;background:#e9e9e9"></div>
<div class="a" style="left:205px;top:454.0px;width:1124px;height:9px;border:1px solid #e9e9e9;border-top:0;border-radius:0 0 2px 4px"></div>
<div class="hl" style="left:206px;top:241px;width:1121px"></div>
<div class="cb" style="left:224px;top:216px"></div>
<span class="t" style="left:266.2px;top:218px;font-size:11px;font-weight:700;color:#2a91e3;letter-spacing:-0.129px;">Lorena Lopez</span>
<span class="t" style="left:490.3px;top:218px;font-size:11.5px;color:#4a4a4a;letter-spacing:0.325px;">999999</span>
<span class="t" style="left:714.6px;top:218px;font-size:11.5px;color:#4a4a4a;letter-spacing:-0.119px;">No aplica</span>
<span class="t" style="left:849.4px;top:218px;font-size:11.5px;color:#4a4a4a;letter-spacing:-0.119px;">No aplica</span>
<div class="eb" style="left:1216px;top:212px;height:25px"><i style="height:23px"></i><b style="top:10px"></b></div>
<span class="t" style="left:1228.3px;top:218px;font-size:11.5px;font-weight:700;color:#2a91e3;letter-spacing:-0.253px;transform:scaleX(0.9831);transform-origin:0 50%;">Editar</span>
<div class="hl" style="left:206px;top:278px;width:1121px"></div>
<div class="cb" style="left:224px;top:253px"></div>
<span class="t" style="left:266.2px;top:255px;font-size:11px;font-weight:700;color:#2a91e3;letter-spacing:-0.184px;">Lorenzo Lopez</span>
<span class="t" style="left:490.3px;top:255px;font-size:11.5px;color:#4a4a4a;letter-spacing:0.325px;">777777</span>
<span class="t" style="left:602.3px;top:255px;font-size:11.5px;color:#4a4a4a;letter-spacing:0.325px;">777777</span>
<span class="t" style="left:714.6px;top:255px;font-size:11.5px;color:#4a4a4a;letter-spacing:0.140px;">02 nov. 2025</span>
<span class="t" style="left:849.4px;top:255px;font-size:11.5px;color:#4a4a4a;letter-spacing:-0.119px;">No aplica</span>
<span class="t" style="left:983.6px;top:255px;font-size:11.5px;color:#4a4a4a;letter-spacing:0.123px;">$ 1.600.000</span>
<span class="t" style="left:1096.4px;top:255px;font-size:11.5px;color:#4a4a4a;letter-spacing:-0.075px;">Indefinido</span>
<div class="eb" style="left:1216px;top:249px;height:25px"><i style="height:23px"></i><b style="top:10px"></b></div>
<span class="t" style="left:1228.3px;top:255px;font-size:11.5px;font-weight:700;color:#2a91e3;letter-spacing:-0.253px;transform:scaleX(0.9831);transform-origin:0 50%;">Editar</span>
<div class="hl" style="left:206px;top:315px;width:1121px"></div>
<div class="cb" style="left:224px;top:289px"></div>
<span class="t" style="left:266.2px;top:292px;font-size:11px;font-weight:700;color:#2a91e3;letter-spacing:0.158px;">Santiago Vargas</span>
<span class="t" style="left:490.3px;top:292px;font-size:11.5px;color:#4a4a4a;letter-spacing:0.303px;">3333333</span>
<span class="t" style="left:602.3px;top:292px;font-size:11.5px;color:#4a4a4a;letter-spacing:0.506px;">890</span>
<span class="t" style="left:714.6px;top:292px;font-size:11.5px;color:#4a4a4a;letter-spacing:-0.041px;">01 ene. 2020</span>
<span class="t" style="left:849.4px;top:292px;font-size:11.5px;color:#4a4a4a;letter-spacing:-0.041px;">01 ene. 2026</span>
<span class="t" style="left:983.6px;top:292px;font-size:11.5px;color:#4a4a4a;letter-spacing:0.123px;">$ 1.500.000</span>
<span class="t" style="left:1096.4px;top:292px;font-size:11.5px;color:#4a4a4a;letter-spacing:-0.253px;transform:scaleX(0.9622);transform-origin:0 50%;">Fijo</span>
<div class="eb" style="left:1216px;top:285px;height:25px"><i style="height:23px"></i><b style="top:10px"></b></div>
<span class="t" style="left:1228.3px;top:292px;font-size:11.5px;font-weight:700;color:#2a91e3;letter-spacing:-0.253px;transform:scaleX(0.9831);transform-origin:0 50%;">Editar</span>
<div class="hl" style="left:206px;top:351px;width:1121px"></div>
<div class="cb" style="left:224px;top:326px"></div>
<span class="t" style="left:266.2px;top:328px;font-size:11px;font-weight:700;color:#2a91e3;letter-spacing:-0.061px;">Ivan Rovayo</span>
<span class="t" style="left:490.3px;top:328px;font-size:11.5px;color:#4a4a4a;letter-spacing:0.344px;">10000865144</span>
<span class="t" style="left:602.3px;top:328px;font-size:11.5px;color:#4a4a4a;letter-spacing:0.344px;">10000865144</span>
<span class="t" style="left:714.6px;top:328px;font-size:11.5px;color:#4a4a4a;letter-spacing:0.069px;">01 mar. 2022</span>
<span class="t" style="left:849.4px;top:328px;font-size:11.5px;color:#4a4a4a;letter-spacing:0.051px;">31 may. 2024</span>
<span class="t" style="left:983.6px;top:328px;font-size:11.5px;color:#4a4a4a;letter-spacing:0.123px;">$ 1.160.000</span>
<span class="t" style="left:1096.4px;top:328px;font-size:11.5px;color:#4a4a4a;letter-spacing:-0.067px;">Obra o labor</span>
<div class="eb" style="left:1216px;top:322px;height:25px"><i style="height:23px"></i><b style="top:10px"></b></div>
<span class="t" style="left:1228.3px;top:328px;font-size:11.5px;font-weight:700;color:#2a91e3;letter-spacing:-0.253px;transform:scaleX(0.9831);transform-origin:0 50%;">Editar</span>
<div class="hl" style="left:206px;top:388px;width:1121px"></div>
<div class="cb" style="left:224px;top:363px"></div>
<span class="t" style="left:266.2px;top:365px;font-size:11px;font-weight:700;color:#2a91e3;letter-spacing:0.050px;">Monica Zanabria</span>
<span class="t" style="left:490.3px;top:365px;font-size:11.5px;color:#4a4a4a;letter-spacing:0.404px;">52488722</span>
<span class="t" style="left:602.3px;top:365px;font-size:11.5px;color:#4a4a4a;letter-spacing:0.404px;">52488722</span>
<span class="t" style="left:714.6px;top:365px;font-size:11.5px;color:#4a4a4a;letter-spacing:-0.041px;">01 ene. 2022</span>
<span class="t" style="left:849.4px;top:365px;font-size:11.5px;color:#4a4a4a;letter-spacing:-0.119px;">No aplica</span>
<span class="t" style="left:983.6px;top:365px;font-size:11.5px;color:#4a4a4a;letter-spacing:0.123px;">$ 1.160.000</span>
<span class="t" style="left:1096.4px;top:365px;font-size:11.5px;color:#4a4a4a;letter-spacing:-0.075px;">Indefinido</span>
<div class="eb" style="left:1216px;top:359px;height:25px"><i style="height:23px"></i><b style="top:10px"></b></div>
<span class="t" style="left:1228.3px;top:365px;font-size:11.5px;font-weight:700;color:#2a91e3;letter-spacing:-0.253px;transform:scaleX(0.9831);transform-origin:0 50%;">Editar</span>
<div class="hl" style="left:206px;top:425px;width:1121px"></div>
<div class="cb" style="left:224px;top:400px"></div>
<span class="t" style="left:266.2px;top:402px;font-size:11px;font-weight:700;color:#2a91e3;letter-spacing:-0.059px;">Andres Camilo Bernal</span>
<span class="t" style="left:490.3px;top:402px;font-size:11.5px;color:#4a4a4a;letter-spacing:0.404px;">52972584</span>
<span class="t" style="left:602.3px;top:402px;font-size:11.5px;color:#4a4a4a;letter-spacing:0.404px;">52972584</span>
<span class="t" style="left:714.6px;top:402px;font-size:11.5px;color:#4a4a4a;letter-spacing:-0.041px;">01 ene. 2022</span>
<span class="t" style="left:849.4px;top:402px;font-size:11.5px;color:#4a4a4a;letter-spacing:0.012px;">31 dic. 2022</span>
<span class="t" style="left:983.6px;top:402px;font-size:11.5px;color:#4a4a4a;letter-spacing:0.123px;">$ 1.500.000</span>
<span class="t" style="left:1096.4px;top:402px;font-size:11.5px;color:#4a4a4a;letter-spacing:-0.253px;transform:scaleX(0.9622);transform-origin:0 50%;">Fijo</span>
<div class="eb" style="left:1216px;top:396px;height:25px"><i style="height:23px"></i><b style="top:10px"></b></div>
<span class="t" style="left:1228.3px;top:402px;font-size:11.5px;font-weight:700;color:#2a91e3;letter-spacing:-0.253px;transform:scaleX(0.9831);transform-origin:0 50%;">Editar</span>
<div class="cb" style="left:224px;top:436px"></div>
<span class="t" style="left:266.2px;top:439px;font-size:11px;font-weight:700;color:#2a91e3;letter-spacing:-0.078px;">Erica johana Moreno Perdomo</span>
<span class="t" style="left:490.3px;top:439px;font-size:11.5px;color:#4a4a4a;letter-spacing:0.359px;">1022391458</span>
<span class="t" style="left:602.3px;top:439px;font-size:11.5px;color:#4a4a4a;letter-spacing:0.359px;">1022391458</span>
<span class="t" style="left:714.6px;top:439px;font-size:11.5px;color:#4a4a4a;letter-spacing:-0.041px;">01 ene. 2022</span>
<span class="t" style="left:849.4px;top:439px;font-size:11.5px;color:#4a4a4a;letter-spacing:0.012px;">31 dic. 2022</span>
<span class="t" style="left:983.6px;top:439px;font-size:11.5px;color:#4a4a4a;letter-spacing:0.123px;">$ 2.000.000</span>
<span class="t" style="left:1096.4px;top:439px;font-size:11.5px;color:#4a4a4a;letter-spacing:-0.067px;">Obra o labor</span>
<div class="eb" style="left:1216px;top:432px;height:25px"><i style="height:23px"></i><b style="top:10px"></b></div>
<span class="t" style="left:1228.3px;top:439px;font-size:11.5px;font-weight:700;color:#2a91e3;letter-spacing:-0.253px;transform:scaleX(0.9831);transform-origin:0 50%;">Editar</span>
<!-- status tooltip + page edge -->
<div class="a" style="left:0;top:0;width:0;height:0;z-index:5"><div id="status"></div>
<span class="t" style="left:5.0px;top:634px;font-size:12px;color:#1a1a1a;letter-spacing:0.175px;">https://siigonube.siigo.com/#/payroll/1840</span></div>
<div id="rshadow"></div>
<div id="bshadow"></div>
<div id="tedge"></div>
<svg style="left:26.500px;top:215.500px" width="19" height="24" viewBox="0 0 19 24"><path d="M5.700 1.600c0-.9.700-1.400 1.500-1.400s1.500.5 1.500 1.400v4.800c.3-.5.800-.7 1.400-.7.800 0 1.400.4 1.500 1.100.3-.4.800-.6 1.300-.6.800 0 1.400.5 1.500 1.200.3-.3.700-.5 1.200-.5.900 0 1.500.7 1.500 1.600v7.300c0 2-.5 3.400-1.300 4.700-.9 1.500-2.300 2.400-4.200 2.400h-2c-1.800 0-3.200-.7-4.300-2.100L1.100 15.200c-.6-.8-.6-1.700 0-2.300.7-.6 1.700-.5 2.400.200l2.200 2.300z" fill="#fff" stroke="#111" stroke-width="1.200" stroke-linejoin="round"/><path d="M8.700 6.600v5.400M11.600 7.200v4.800M14.400 7.800v4.200" stroke="#111" stroke-width="1.100" fill="none"/></svg>
</div><!-- /page -->
<!-- ================= TASKBAR ================= -->
<div id="task">
  <!-- windows logo -->
  <svg style="left:15.800px;top:11.800px" width="16.500" height="16.500" viewBox="0 0 16.500 16.500" fill="#fff"><path d="M0 2.300l6.700-.9v6.500H0zM7.500 1.300L16.500 0v7.900h-9zM0 8.700h6.700v6.500L0 14.300zM7.500 8.700h9v7.800l-9-1.300z"/></svg>
  <!-- search box -->
  <div class="a" style="left:48px;top:0;width:288px;height:40px;background:#f3f3f3;border-top:1px solid #c6c6c6;border-bottom:1px solid #dadada"></div>
  <svg style="left:59.500px;top:11.500px" width="17" height="17" viewBox="0 0 17 17" stroke="#1a1a1a" stroke-width="1.100" fill="none"><circle cx="10.600" cy="6.400" r="5.500"/><path d="M6.700 10.300L.500 16.500"/></svg>
  <span class="t" style="left:88.0px;top:13px;font-size:15px;color:#1f1f1f;letter-spacing:-0.330px;transform:scaleX(0.9459);transform-origin:0 50%;">Buscar</span>
  <!-- sparkles -->
  <svg style="left:263px;top:6px" width="64" height="30" viewBox="0 0 64 30">
    <defs><linearGradient id="sg" x1="0" y1="0" x2="0" y2="1"><stop offset="0" stop-color="#fbd02a"/><stop offset="1" stop-color="#f5b316"/></linearGradient></defs>
    <path d="M25.2 2.50Q28.29 10.06 35.50 13.3Q28.29 16.54 25.2 24.10Q22.11 16.54 14.90 13.3Q22.11 10.06 25.2 2.50z" fill="#f8c21c" stroke="#f8c21c" stroke-width="2.4" stroke-linejoin="round"/>
    <path d="M47.8 12.50Q49.09 15.72 52.10 17.1Q49.09 18.48 47.8 21.70Q46.51 18.48 43.50 17.1Q46.51 15.72 47.8 12.50z" fill="#f8c21c" stroke="#f8c21c" stroke-width="1.6" stroke-linejoin="round"/>
    <g transform="rotate(20 5.900 21.800)"><path d="M5.9 18.20Q6.92 20.72 9.30 21.8Q6.92 22.88 5.9 25.40Q4.88 22.88 2.50 21.8Q4.88 20.72 5.9 18.20z" fill="#2ba3ec" stroke="#2ba3ec" stroke-width="1.3" stroke-linejoin="round"/></g>
    <circle cx="41.500" cy="3.900" r="1.900" fill="#ee5a24"/>
    <circle cx="59.900" cy="23.800" r="1.900" fill="#8bbb3f"/>
  </svg>
  <!-- task view -->
  <svg style="left:351.500px;top:12px" width="17" height="15.500" viewBox="0 0 17 15.500" stroke="#fff" stroke-width="1.100" fill="none"><rect x=".6" y="4.300" width="11" height="6.800"/><path d="M.6 2.600V.600h11v2M.6 12.900v2h11v-2M14.800 0v3.300M14.800 8.300v7.200"/><rect x="13.500" y="4.300" width="2.700" height="2.700" fill="#fff" stroke="none"/></svg>
  <!-- edge (active) -->
  <div class="a" style="left:387px;top:0;width:44.500px;height:40px;background:#45555d"></div>
  <div class="a" style="left:431.500px;top:0;width:3.500px;height:40px;background:#3a4a53"></div>
  <div class="a" style="left:387px;top:38px;width:44.500px;height:2px;background:#76b9ed"></div>
  <div class="a" style="left:432.500px;top:38px;width:2.500px;height:2px;background:#76b9ed"></div>
  <svg style="left:398px;top:7.500px" width="26" height="25" viewBox="0 0 26 25">
    <defs><linearGradient id="eg1" x1="0" y1="0" x2="1" y2="1"><stop offset="0" stop-color="#35c1f1"/><stop offset=".55" stop-color="#3bd29a"/><stop offset="1" stop-color="#6adf5c"/></linearGradient>
    <linearGradient id="eg2" x1="0" y1="0" x2="0" y2="1"><stop offset="0" stop-color="#1f8fe0"/><stop offset="1" stop-color="#0f4fb0"/></linearGradient></defs>
    <path d="M1.200 11.500C1.800 5 7 .300 13.300.300c6.700 0 11.900 4.500 11.900 10.600 0 3.800-2.800 6.300-6.300 6.300-2.400 0-3.800-1-3.800-2.400 0-.8.700-1.300.7-2.500 0-2.300-2.100-4.200-5-4.200-3.500 0-6.700 2.300-9.600 3.400z" fill="url(#eg1)"/>
    <path d="M1.200 11.500c-.6 6.500 4 12.600 10.800 13 4.600.3 8.600-1.400 11-4.500-1.800 1-3.700 1.400-5.600 1.300-4.500-.3-7.900-3.500-7.900-7.300 0-2 1-3.600 2.400-4.600-4.400-.8-8.700.600-10.700 2.100z" fill="url(#eg2)"/>
    <rect x=".3" y="15.800" width="12.400" height="8.600" rx="1" fill="#d07d12"/><rect x=".3" y="15.800" width="12.400" height="3.600" rx="1" fill="#f0a52a"/><rect x="4.200" y="14.300" width="4.600" height="2.200" rx=".8" fill="none" stroke="#b86a0c" stroke-width=".9"/><rect x="5.600" y="18.600" width="1.800" height="1.800" fill="#ffe39a"/>
  </svg>
  <!-- explorer -->
  <svg style="left:449px;top:10.500px" width="22" height="18.500" viewBox="0 0 22 18.500"><path d="M0 1.400C0 .600.600 0 1.400 0h6.200l1.600 1.700H0z" fill="#e5a122"/><rect x="0" y="1.500" width="22" height="15.800" rx=".8" fill="#fbd463"/><path d="M0 1.500h9.300l-1.300 1.500H0z" fill="#f0b93a"/><path d="M3.700 17.300V9.400h14.600v7.900h-3.200v-4.700H6.900v4.700z" fill="#3d9ae4"/><rect x="6.900" y="12.600" width="8.200" height="1.300" fill="#2a7fd0"/><rect x="8.300" y="14.800" width="5.400" height="3.200" fill="#f6c544"/></svg>
  <!-- anydesk-like blue tile -->
  <div class="a" style="left:496.500px;top:8px;width:24.500px;height:24px;background:#1b47bf"></div>
  <svg style="left:500.500px;top:13.500px" width="17" height="12" viewBox="0 0 17 12"><path d="M5.300.600L10.600 6l-5.300 5.400L0 6z" fill="#fff"/><path d="M10.300.900L15.400 6l-5.100 5.100" fill="none" stroke="#fff" stroke-width="1.900"/></svg>
  <!-- teams -->
  <svg style="left:545.500px;top:7.500px" width="27" height="27" viewBox="0 0 27 27"><circle cx="9" cy="3.800" r="3.500" fill="#8b8ff2"/><circle cx="18.300" cy="6" r="2.800" fill="#8b8ff2"/><path d="M13.500 9.300h9.500v7.300c0 2.600-2.100 4.700-4.700 4.700s-4.800-2.100-4.800-4.700z" fill="#5a5fd0"/><path d="M3.500 8.600h11.600v9.200a5.800 5.800 0 0 1-11.600 0z" fill="#6c70e0"/><rect x=".3" y="11" width="9.600" height="9.600" rx="1.300" fill="#4348b9"/><path d="M2.900 13.600h4.500M5.150 13.600v5" stroke="#fff" stroke-width="1.400" fill="none"/><circle cx="18.700" cy="18.500" r="7.400" fill="#d2101c" stroke="#fff" stroke-width="1.100"/></svg>
  <div class="a" style="left:538px;top:38px;width:40px;height:2px;background:#76b9ed"></div>
  <!-- snipping tool -->
  <svg style="left:595px;top:9px" width="25" height="23" viewBox="0 0 25 23"><ellipse cx="11.200" cy="8.600" rx="11" ry="6.400" transform="rotate(-17 11.200 8.600)" fill="#f4f4f4" stroke="#d42b2b" stroke-width="1.100"/><path d="M.800 11.600c1.200 3 5.800 4 11.200 2.700l-.3 2.200c-5.600 1.200-10-.2-10.900-2.800z" fill="#9a9a9a"/><path d="M11.800 3.200l2.600 10.200M5.600 7l9 6" stroke="#7d7d7d" stroke-width="1.100" fill="none"/><ellipse cx="15.300" cy="17.600" rx="1.900" ry="3" transform="rotate(-25 15.300 17.600)" fill="none" stroke="#1f8fd8" stroke-width="1.400"/><ellipse cx="20.400" cy="14.300" rx="1.900" ry="3" transform="rotate(-62 20.400 14.300)" fill="none" stroke="#1f8fd8" stroke-width="1.400"/></svg>
  <div class="a" style="left:587px;top:38px;width:40px;height:2px;background:#76b9ed"></div>
  <!-- weather -->
  <svg style="left:895px;top:8px" width="25" height="25" viewBox="0 0 25 25"><path d="M.600 14.200C1.200 8.300 5.600 4.300 11 4.300s9.400 3.600 10.200 9.300c-1.500-1.300-3.300-1.400-4.900-.3-1.600-1.300-3.600-1.300-5.200 0-1.700-1.300-3.700-1.300-5.300.1-1.600-1.100-3.600-.8-5.200.8z" fill="#56b4f0"/><path d="M11 4.300c2.800 2 4.500 5.300 5.300 9-1.600-1.300-3.600-1.300-5.200 0z" fill="#3a98e2"/><path d="M11 13v8.300c0 1.400-.9 2.300-2.100 2.300-1.100 0-1.900-.8-1.900-1.900" stroke="#9aa3aa" stroke-width="1.400" fill="none" stroke-linecap="round"/><path d="M15.600 1.200l-.8 1.900M19.600 2.600l-.8 1.900M22.800 5.600l-.8 1.900M23.900 10.300l-.6 1.500" stroke="#56b4f0" stroke-width="1.300" stroke-linecap="round"/></svg>
  <span class="t" style="left:926.8px;top:13px;font-size:15px;color:#ffffff;letter-spacing:-0.330px;transform:scaleX(0.9354);transform-origin:0 50%;">Se avecinan días lluvi...</span>
  <!-- tray -->
  <svg style="left:1093px;top:16px" width="12.500" height="7.500" viewBox="0 0 12.500 7.500" stroke="#fff" stroke-width="1.200" fill="none"><path d="M.500 7L6.250.800 12 7"/></svg>
  <svg style="left:1117.300px;top:11.500px" width="10.400" height="17" viewBox="0 0 10.400 17" fill="none" stroke="#fff" stroke-width="1.050"><rect x="2.300" y=".5" width="5.800" height="10.400" rx="2.200" fill="#fff"/><path d="M.500 7.700v1a4.700 4.700 0 0 0 9.400 0v-1M5.200 13.400v2.900M2.500 16.400h5.400"/></svg>
  <svg style="left:1138.500px;top:14px" width="17.500" height="12" viewBox="0 0 17.500 12" fill="none" stroke="#fff" stroke-width="1.050"><rect x="4.900" y="2.700" width="11.300" height="7.400"/><rect x="6.300" y="4.100" width="7" height="4.600" fill="#fff" stroke="none"/><path d="M16.300 5h.9v2.800h-.9"/><path d="M1.200 0v2.300M3.500 0v2.300M.3 2.500h4.100v1.800a2 2 0 0 1-4.100 0zM2.350 6.300v1.500h2.500"/></svg>
  <svg style="left:1165px;top:12.500px" width="15" height="15" viewBox="0 0 15 15" fill="none" stroke="#fff" stroke-width="1.100"><path d="M1 13.800A12.800 12.800 0 0 1 13.800 1M4.200 13.800a9.600 9.600 0 0 1 9.600-9.600M7.400 13.800a6.400 6.400 0 0 1 6.400-6.400M10.500 13.800a3.300 3.300 0 0 1 3.300-3.300" opacity=".9"/><circle cx="13.300" cy="13.300" r="1.300" fill="#fff" stroke="none"/></svg>
  <svg style="left:1186.500px;top:12.500px" width="17" height="15" viewBox="0 0 17 15" fill="none" stroke="#fff" stroke-width="1.050"><path d="M.600 5.200h2.800L7.300 1.500v12L3.400 9.800H.600z"/><path d="M9.600 5.200a3.300 3.300 0 0 1 0 4.600M11.700 3.300a6 6 0 0 1 0 8.400" /><path d="M13.900 1.400a8.800 8.800 0 0 1 0 12.200" opacity=".45"/></svg>
  <span class="t" style="left:1215.3px;top:14px;font-size:12px;color:#ffffff;letter-spacing:-0.264px;transform:scaleX(0.7834);transform-origin:0 50%;">ESP</span>
  <span class="t" style="left:1250.2px;top:5px;font-size:12px;color:#ffffff;letter-spacing:-0.264px;transform:scaleX(0.9944);transform-origin:0 50%;">11:20 a. m.</span>
  <span class="t" style="left:1249.4px;top:23px;font-size:12px;color:#ffffff;letter-spacing:-0.175px;">10/11/2025</span>
  <svg style="left:1325px;top:12px" width="16" height="16" viewBox="0 0 16 16" fill="none" stroke="#fff" stroke-width="1.100"><path d="M.600.600h14.800v11.500H10l-2 2.600-2-2.600H.600z" stroke-linejoin="miter"/></svg>
  <div class="a" style="left:1361px;top:0;width:1px;height:40px;background:#8b968b"></div>
</div>
</body>
</html>
